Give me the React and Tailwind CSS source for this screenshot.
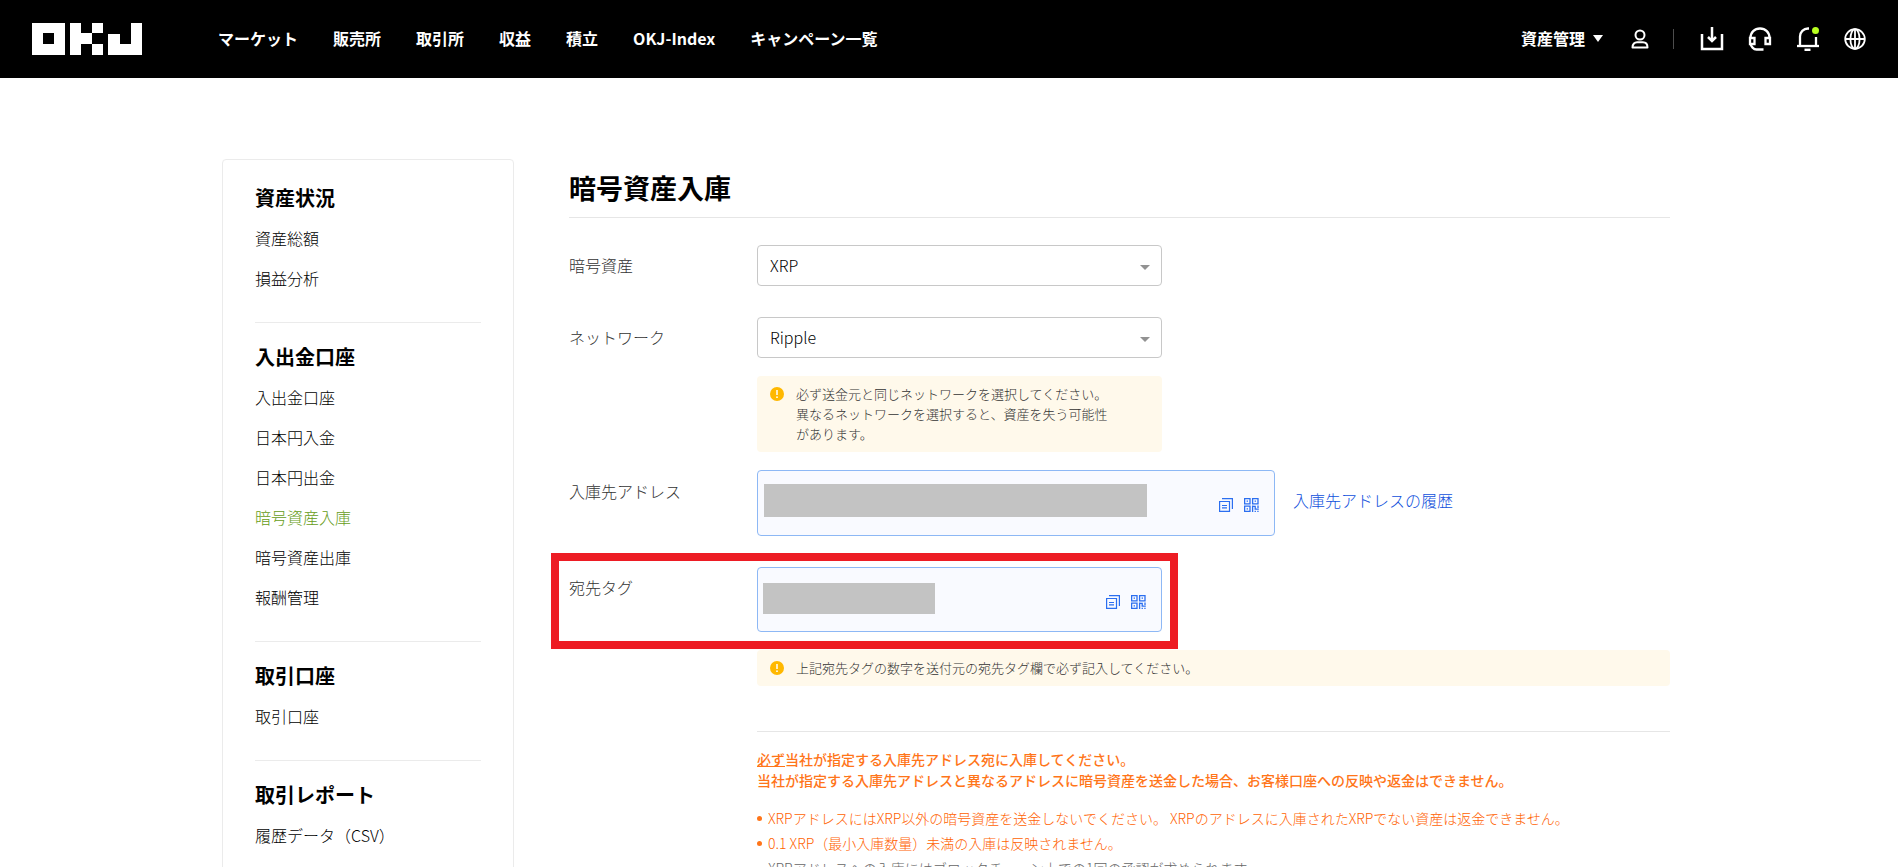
const navItems = ["マーケット", "販売所", "取引所", "収益", "積立", "OKJ-Index", "キャンペーン一覧"];

const menu = [
  { title: "資産状況", items: ["資産総額", "損益分析"] },
  {
    title: "入出金口座",
    items: ["入出金口座", "日本円入金", "日本円出金", "暗号資産入庫", "暗号資産出庫", "報酬管理"],
  },
  { title: "取引口座", items: ["取引口座"] },
  { title: "取引レポート", items: ["履歴データ（CSV）"] },
];

function Logo() {
  return (
    <svg width="110" height="32" viewBox="0 0 110 32" fill="#fff" shapeRendering="crispEdges" aria-label="OKJ">
      <path fillRule="evenodd" d="M0 0h33v32H0zM11 10v11h11V10z" />
      <path d="M38 0h11v10h11v11H49v11H38zM60 0h11v10H60zM60 21h11v11H60z" />
      <path d="M99 0h11v32H76V11h12v10h11z" />
    </svg>
  );
}

function UserIcon() {
  return (
    <svg width="18" height="20" viewBox="0 0 18 20" fill="none" stroke="#fff" strokeWidth="2">
      <circle cx="9" cy="6" r="4.500" />
      <path d="M1.500 18.500c0-3.600 2.200-5.300 4.600-5.300h5.800c2.400 0 4.600 1.700 4.600 5.300z" strokeLinejoin="round" />
    </svg>
  );
}

function DownloadIcon() {
  return (
    <svg width="24" height="24" viewBox="0 0 24 24" fill="none" stroke="#fff" strokeWidth="2.500">
      <path d="M2 7v15h20V7" />
      <path d="M12 0v14" />
      <path d="M8 10l4 4 4-4" />
    </svg>
  );
}

function HeadsetIcon() {
  return (
    <svg width="24" height="24" viewBox="0 0 24 24" fill="none" stroke="#fff" strokeWidth="2.300">
      <path d="M2.500 11c0-5.500 4-9.500 9.500-9.500s9.500 4 9.500 9.500" />
      <path d="M2 11h4.500v6H2zM17.500 11H22v6h-4.500z" />
      <path d="M2.500 16.500c.5 3 3 6 6 6h7" />
    </svg>
  );
}

function BellIcon() {
  return (
    <svg width="24" height="24" viewBox="0 0 24 24" fill="none" stroke="#fff" strokeWidth="2.300">
      <path d="M13 1.500h-1c-4.500 0-8 3.500-8 8v9" />
      <path d="M20 10v9" />
      <path d="M1 19h22" />
      <path d="M8.500 22.800h6" strokeWidth="2.400" />
      <circle cx="19.500" cy="3.500" r="3.500" fill="#b8ff1f" stroke="none" />
    </svg>
  );
}

function GlobeIcon() {
  return (
    <svg width="22" height="22" viewBox="0 0 22 22" fill="none" stroke="#fff" strokeWidth="1.800">
      <circle cx="11" cy="11" r="9.800" />
      <ellipse cx="11" cy="11" rx="4.600" ry="9.800" />
      <path d="M1 11h20M11 1v20" />
    </svg>
  );
}

function CopyIcon() {
  return (
    <svg width="14" height="14" viewBox="0 0 14 14" fill="none" stroke="#2b6ef0" strokeWidth="1.200">
      <path d="M3 .6h10.400V11" />
      <path d="M.6 3.500h9.900v9.900H.6z" />
      <path d="M3 7.500h5M3 9.800h5" />
    </svg>
  );
}

function QrIcon() {
  return (
    <svg width="15" height="14" viewBox="0 0 15 14" fill="none" stroke="#2b6ef0" strokeWidth="1.300">
      <path d="M.6.6h5.400v5.200H.6zM8.600.6H14v5.200H8.600zM.6 8.200h5.400v5.200H.6z" />
      <path d="M2.600 3.200h1.400M10.600 3.200H12M2.600 10.800h1.400" />
      <path d="M8.600 7.600V14M8 8.400h3.200v2.800h3.600M14 7.600V10M10.600 13.300h1.300M13.300 13.300h1.300" />
    </svg>
  );
}

function AlertIcon() {
  return (
    <svg className="mt-[3px] shrink-0" width="14" height="14" viewBox="0 0 14 14">
      <circle cx="7" cy="7" r="7" fill="#ffb800" />
      <path d="M7 3v5" stroke="#fff" strokeWidth="1.500" />
      <circle cx="7" cy="10.200" r=".9" fill="#fff" />
    </svg>
  );
}

function Sidebar() {
  return (
    <aside className="w-[292px] shrink-0 rounded border border-[#ebebeb] px-8 pt-1 pb-10">
      {menu.map((group, i) => (
        <section key={group.title} className={i === 0 ? "pt-5 pb-6" : "border-t border-[#ebebeb] pt-5 pb-6"}>
          <h2 className="mb-1.5 text-[20px] leading-7 font-bold">{group.title}</h2>
          <ul>
            {group.items.map((item) => (
              <li key={item} className="text-[16px] leading-10 font-light">
                <a href="#" className={item === "暗号資産入庫" ? "text-[#669c17]" : "text-black"}>
                  {item}
                </a>
              </li>
            ))}
          </ul>
        </section>
      ))}
    </aside>
  );
}

function SelectField({ id, label, value }) {
  return (
    <div className="flex items-center">
      <label htmlFor={id} className="w-[188px] shrink-0 pb-0.5 text-[16px] font-light text-[#333]">
        {label}
      </label>
      <div className="relative w-[405px]">
        <select
          id={id}
          defaultValue={value}
          className="block h-[41px] w-full appearance-none rounded border border-[#c8c8c8] bg-white px-3 pb-0.5 text-[16px] font-light text-black"
        >
          <option>{value}</option>
        </select>
        <svg className="pointer-events-none absolute top-5 right-3" width="10" height="5" viewBox="0 0 10 5">
          <path d="M0 0h10L5 5z" fill="#929292" />
        </svg>
      </div>
    </div>
  );
}

function CopyButtons() {
  return (
    <div className="mt-1 flex items-center gap-[11px]">
      <button type="button" aria-label="コピー">
        <CopyIcon />
      </button>
      <button type="button" aria-label="QRコード">
        <QrIcon />
      </button>
    </div>
  );
}

function Notice({ children }) {
  return (
    <div className="flex gap-3 rounded bg-[#fff9eb] py-2 pr-[52px] pl-[13px] text-[13px] leading-5 font-light text-[#333]">
      <AlertIcon />
      <p>{children}</p>
    </div>
  );
}

export default function App() {
  return (
    <div lang="ja" className="h-screen overflow-hidden bg-white font-['Noto_Sans_CJK_JP',sans-serif] text-black">
      <header className="flex h-[78px] items-center bg-black px-8 text-[16px] font-bold text-white">
        <a href="#">
          <Logo />
        </a>
        <nav className="ml-[76px] flex gap-[35px] pb-0.5">
          {navItems.map((item) => (
            <a key={item} href="#">
              {item}
            </a>
          ))}
        </nav>
        <div className="ml-auto flex items-center">
          <button type="button" className="flex items-center gap-2 pb-0.5">
            資産管理
            <svg width="10" height="7" viewBox="0 0 10 7">
              <path d="M0 0h10L5 7z" fill="#fff" />
            </svg>
          </button>
          <button type="button" aria-label="アカウント" className="ml-7">
            <UserIcon />
          </button>
          <span className="ml-6 h-5 w-px bg-[#4d4d4d]" />
          <div className="ml-[26px] flex items-center gap-6">
            <button type="button" aria-label="ダウンロード">
              <DownloadIcon />
            </button>
            <button type="button" aria-label="サポート">
              <HeadsetIcon />
            </button>
            <button type="button" aria-label="お知らせ">
              <BellIcon />
            </button>
            <button type="button" aria-label="言語">
              <GlobeIcon />
            </button>
          </div>
        </div>
      </header>

      <main className="mx-auto flex max-w-[1454px] items-start gap-[55px] pt-[81px] pr-[6px]">
        <Sidebar />
        <div className="min-w-0 flex-1">
          <h1 className="border-b border-[#e6e6e6] py-[9px] text-[27px] leading-10 font-bold">暗号資産入庫</h1>

          <div className="mt-[27px] flex flex-col gap-[31px]">
            <SelectField id="asset" label="暗号資産" value="XRP" />
            <SelectField id="network" label="ネットワーク" value="Ripple" />
          </div>
          <div className="mt-[18px] ml-[188px] w-[405px]">
            <Notice>
              必ず送金元と同じネットワークを選択してください。
              <br />
              異なるネットワークを選択すると、資産を失う可能性があります。
            </Notice>
          </div>

          {/* deposit address */}
          <div className="mt-[18px] flex">
            <div className="w-[188px] shrink-0 pt-[9px] text-[16px] leading-6 font-light text-[#333]">
              入庫先アドレス
            </div>
            <div className="flex h-[66px] w-[518px] items-center justify-between rounded border border-[#8db8f5] bg-[#f9faff] pr-[15px] pl-[6px]">
              <div className="mb-[5px] h-[33px] w-[383px] bg-[#c3c3c3]" />
              <CopyButtons />
            </div>
            <a href="#" className="ml-[18px] pt-[18px] text-[16px] leading-6 font-light text-[#0f50dc]">
              入庫先アドレスの履歴
            </a>
          </div>

          {/* destination tag, outlined in red */}
          <div className="mt-[17px] -ml-[18px] flex w-[627px] border-8 border-[#ed1c24] pt-[6px] pb-[9px] pl-[10px]">
            <div className="w-[188px] shrink-0 pt-2 text-[16px] leading-6 font-light text-[#333]">宛先タグ</div>
            <div className="flex h-[65px] w-[405px] items-center justify-between rounded border border-[#8db8f5] bg-[#f9faff] pr-[15px] pl-[5px]">
              <div className="mb-[3px] h-[31px] w-[172px] bg-[#c3c3c3]" />
              <CopyButtons />
            </div>
          </div>

          <div className="mt-px ml-[188px]">
            <Notice>上記宛先タグの数字を送付元の宛先タグ欄で必ず記入してください。</Notice>
            <div className="mt-[45px] border-t border-[#e6e6e6] pt-[17px] text-[#ff7519]">
              <p className="text-[14px] leading-[21px] font-medium">
                <span className="underline">必ず</span>当社が指定する入庫先アドレス宛に入庫してください。
                <br />
                当社が指定する入庫先アドレスと異なるアドレスに暗号資産を送金した場合、お客様口座への反映や返金はできません。
              </p>
              <ul className="mt-[15px] text-[14px] leading-[25px] font-light text-[#ff6200]">
                <li className="flex items-center gap-[6px]">
                  <span className="size-[5px] rounded-full bg-[#ff7519]" />
                  XRPアドレスにはXRP以外の暗号資産を送金しないでください。 XRPのアドレスに入庫されたXRPでない資産は返金できません。
                </li>
                <li className="flex items-center gap-[6px]">
                  <span className="size-[5px] rounded-full bg-[#ff7519]" />
                  0.1 XRP（最小入庫数量）未満の入庫は反映されません。
                </li>
                <li className="pl-[11px] text-[#666]">
                  XRPアドレスへの入庫にはブロックチェーン上での1回の承認が求められます。
                </li>
              </ul>
            </div>
          </div>
        </div>
      </main>
    </div>
  );
}
